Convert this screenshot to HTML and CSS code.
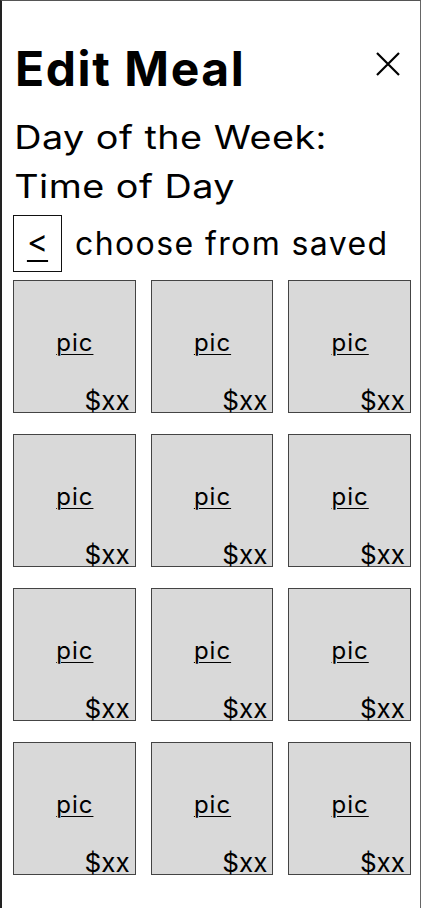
FILE: index.html
```html
<!DOCTYPE html>
<html lang="en">
<head>
<meta charset="utf-8">
<title>Edit Meal</title>
<link rel="stylesheet" href="styles.css">
</head>
<body>
<div class="frame">
  <header class="header">
    <h1 class="title">Edit Meal</h1>
    <button class="close" aria-label="Close">
      <svg width="24" height="24" viewBox="0 0 24 24"><path d="M1 1 L23 23 M23 1 L1 23" stroke="#000" stroke-width="2.2" fill="none"/></svg>
    </button>
  </header>
  <p class="when">Day of the Week:<br>Time of Day</p>
  <div class="back-row">
    <button class="back"><span>&lt;</span></button>
    <span class="back-label">choose from saved</span>
  </div>
  <div class="grid">
    <div class="card"><span class="pic">pic</span><span class="price">$xx</span></div>
    <div class="card"><span class="pic">pic</span><span class="price">$xx</span></div>
    <div class="card"><span class="pic">pic</span><span class="price">$xx</span></div>
    <div class="card"><span class="pic">pic</span><span class="price">$xx</span></div>
    <div class="card"><span class="pic">pic</span><span class="price">$xx</span></div>
    <div class="card"><span class="pic">pic</span><span class="price">$xx</span></div>
    <div class="card"><span class="pic">pic</span><span class="price">$xx</span></div>
    <div class="card"><span class="pic">pic</span><span class="price">$xx</span></div>
    <div class="card"><span class="pic">pic</span><span class="price">$xx</span></div>
    <div class="card"><span class="pic">pic</span><span class="price">$xx</span></div>
    <div class="card"><span class="pic">pic</span><span class="price">$xx</span></div>
    <div class="card"><span class="pic">pic</span><span class="price">$xx</span></div>
  </div>
</div>
</body>
</html>
```
FILE: styles.css
```css
html, body {
  margin: 0;
  padding: 0;
  background: #fff;
}
body {
  font-family: Inter, "Noto Sans", sans-serif;
  color: #000;
}
.frame {
  box-sizing: border-box;
  width: 421px;
  min-height: 908px;
  border-left: 2px solid #222;
  border-top: 1px solid #555;
  border-right: 1px solid #666;
  padding: 39px 9px 0 11px;
}
.header {
  display: flex;
  justify-content: space-between;
  align-items: flex-start;
}
.title {
  margin: 0;
  padding-left: 2px;
  font-size: 48px;
  font-weight: 700;
  line-height: 58px;
  letter-spacing: 1.6px;
}
.close {
  margin: 12px 11px 0 0;
  padding: 0;
  border: 0;
  background: none;
  width: 24px;
  height: 24px;
  display: block;
}
.close svg { display: block; }
.when {
  width: fit-content;
  margin: 15px 0 0;
  padding-left: 1px;
  font-size: 32px;
  line-height: 49px;
  font-weight: 400;
  letter-spacing: 0.4px;
  transform: scaleX(1.18);
  transform-origin: left center;
}
.back-row {
  display: flex;
  align-items: center;
  gap: 13px;
  margin-top: 4px;
}
.back {
  box-sizing: border-box;
  width: 49px;
  height: 57px;
  border: 1.5px solid #111;
  background: #fff;
  padding: 0;
  display: flex;
  align-items: center;
  justify-content: center;
  font-family: Inter, sans-serif;
  font-size: 32px;
  color: #000;
}
.back span {
  line-height: 38px;
  text-decoration: underline;
  text-decoration-thickness: 2px;
  text-underline-offset: 7px;
  margin-top: -4px;
}
.back-label {
  font-size: 32px;
  line-height: 38px;
  margin-top: 1px;
  letter-spacing: 1.4px;
}
.grid {
  margin-top: 8px;
  width: 398px;
  display: grid;
  grid-template-columns: repeat(3, 1fr);
  column-gap: 15px;
  row-gap: 21px;
}
.card {
  box-sizing: border-box;
  height: 133px;
  background: #d9d9d9;
  border: 1px solid #444;
  display: flex;
  flex-direction: column;
  align-items: center;
  padding: 47px 5px 1px 0;
}
.pic {
  font-size: 24px;
  line-height: 29px;
  letter-spacing: 1px;
  text-decoration: underline;
  text-decoration-thickness: 1px;
  text-underline-offset: 3px;
  margin-left: 6px;
}
.price {
  margin-top: auto;
  align-self: flex-end;
  font-size: 26px;
  line-height: 20px;
}
```
